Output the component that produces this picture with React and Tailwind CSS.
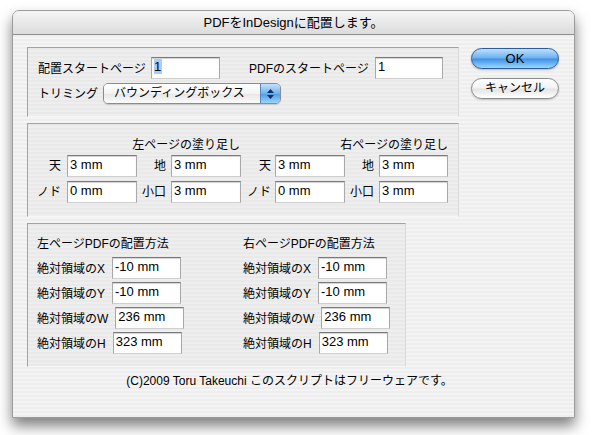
const font = "font-['Liberation_Sans','Noto_Sans_CJK_JP',sans-serif]";

const Field = ({ value, w = "w-[70px]", selected }) => (
  <div
    className={`${w} h-[22px] shrink-0 bg-white border border-[#a9a9a9] border-t-[#7a7a7a] border-b-[#cfcfcf] shadow-[inset_0_1px_1px_rgba(0,0,0,0.18)] pl-[2px] pt-[1px] text-[13px] leading-[16px] text-black`}
  >
    {selected ? <span className="bg-[#a9cdf7] pr-[1px]">{value}</span> : value}
  </div>
);

const GroupBox = ({ className, children }) => (
  <div
    className={`border border-[#a2a2a2] border-r-[#dadada] border-b-[#f6f6f6] bg-[repeating-linear-gradient(180deg,#e9e9e9_0px,#e9e9e9_2px,#eeeeee_2px,#eeeeee_4px)] ${className}`}
  >
    {children}
  </div>
);

const Popup = () => (
  <div className="flex h-[21px] w-[178px] rounded-[5px] border border-[#8c8c8c] overflow-hidden shadow-[0_1px_1px_rgba(0,0,0,0.15)]">
    <div className="flex-1 bg-[linear-gradient(180deg,#ffffff_0%,#f3f3f3_50%,#e6e6e6_51%,#fbfbfb_100%)] pl-[10px] text-[12px] leading-[19px]">
      バウンディングボックス
    </div>
    <div className="w-[20px] border-l border-[#5a86c2] bg-[linear-gradient(180deg,#c6e1fb_0%,#6fb1ef_50%,#4c9be8_51%,#9ad4fb_100%)] flex flex-col items-center justify-center gap-[2px]">
      <svg width="7" height="4" viewBox="0 0 7 4">
        <path d="M3.5 0L7 4H0z" fill="#15305e" />
      </svg>
      <svg width="7" height="4" viewBox="0 0 7 4">
        <path d="M0 0h7L3.5 4z" fill="#15305e" />
      </svg>
    </div>
  </div>
);

const BleedRow = ({ labels, values }) => (
  <div className="flex items-center">
    <div className="w-[39px] pr-[6px] text-right text-[12px]">{labels[0]}</div>
    <Field value={values[0]} />
    <div className="w-[34px] pr-[5px] text-right text-[12px]">{labels[1]}</div>
    <Field value={values[1]} />
    <div className="w-[34px] pr-[4px] text-right text-[12px]">{labels[0]}</div>
    <Field value={values[0]} />
    <div className="w-[34px] pr-[5px] text-right text-[12px]">{labels[1]}</div>
    <Field value={values[1]} w="w-[69px]" />
  </div>
);

const PlaceColumn = ({ title, className }) => {
  const rows = [
    ["X", "-10 mm"],
    ["Y", "-10 mm"],
    ["W", "236 mm"],
    ["H", "323 mm"],
  ];
  return (
    <div className={`flex flex-col ${className}`}>
      <div className="text-[12px] leading-[16px]">{title}</div>
      <div className="mt-[5px] flex flex-col gap-[3px]">
        {rows.map(([axis, val]) => (
          <div key={axis} className="flex items-center">
            <span className="text-[12px] pt-[2px]">絶対領域の{axis}</span>
            <div className="ml-[7px]">
              <Field value={val} w="w-[69px]" />
            </div>
          </div>
        ))}
      </div>
    </div>
  );
};

export default function App() {
  return (
    <div className={`w-[604px] h-[435px] bg-white overflow-hidden pt-[10px] pl-[12px] ${font} text-black`}>
      <div className="w-[563px] rounded-t-[7px] border border-[#9c9c9c] bg-[repeating-linear-gradient(180deg,#eeeeee_0px,#eeeeee_2px,#f4f4f4_2px,#f4f4f4_4px)] shadow-[0_8px_14px_rgba(0,0,0,0.5)]">
        {/* title bar */}
        <div className="h-[24px] rounded-t-[6px] border-b border-[#8e8e8e] bg-[linear-gradient(180deg,#f5f5f5,#dcdcdc)] text-center text-[13px] leading-[23px]">
          PDFをInDesignに配置します。
        </div>

        <div className="flex pt-[12px] pl-[14px]">
          <div className="flex flex-col">
            {/* page settings */}
            <GroupBox className="w-[432px] h-[70px] pt-[9px] pl-[10px]">
              <div className="flex items-center">
                <div className="w-[113px] text-[12px] pt-[2px]">配置スタートページ</div>
                <Field value="1" w="w-[69px]" selected />
                <div className="ml-[29px] w-[126px] text-[12px] pt-[2px]">PDFのスタートページ</div>
                <Field value="1" w="w-[68px]" />
              </div>
              <div className="flex items-center mt-[4px]">
                <div className="w-[65px] text-[12px]">トリミング</div>
                <Popup />
              </div>
            </GroupBox>

            {/* bleed */}
            <GroupBox className="mt-[6px] w-[432px] h-[94px] pt-[13px]">
              <div className="flex text-[12px] leading-[16px]">
                <div className="w-[213px] pr-[1px] text-right">左ページの塗り足し</div>
                <div className="w-[208px] pr-[1px] text-right">右ページの塗り足し</div>
              </div>
              <div className="mt-[2px] flex flex-col gap-[4px]">
                <BleedRow labels={["天", "地"]} values={["3 mm", "3 mm"]} />
                <BleedRow labels={["ノド", "小口"]} values={["0 mm", "3 mm"]} />
              </div>
            </GroupBox>

            {/* placement */}
            <GroupBox className="mt-[6px] w-[379px] h-[144px] pt-[12px] pl-[9px] flex">
              <PlaceColumn title="左ページPDFの配置方法" className="w-[206px] shrink-0" />
              <PlaceColumn title="右ページPDFの配置方法" className="flex-1" />
            </GroupBox>
          </div>

          {/* buttons */}
          <div className="ml-[12px] pt-[1px] flex flex-col">
            <div className="w-[88px] h-[21px] rounded-full border border-[#2b5a9e] bg-[linear-gradient(180deg,#bfe0fb_0%,#6cb0f0_48%,#3f8fe7_52%,#9bd7fc_100%)] shadow-[0_1px_2px_rgba(0,0,0,0.25)] text-center text-[13px] leading-[19px]">
              OK
            </div>
            <div className="mt-[9px] w-[88px] h-[21px] rounded-full border border-[#8a8a8a] bg-[linear-gradient(180deg,#ffffff_0%,#f2f2f2_48%,#e3e3e3_52%,#ffffff_100%)] shadow-[0_1px_2px_rgba(0,0,0,0.2)] text-center text-[12px] leading-[19px]">
              キャンセル
            </div>
          </div>
        </div>

        <div className="mt-[6px] pb-[28px] text-center text-[12px] leading-[16px] pr-[8px]">
          (C)2009 Toru Takeuchi このスクリプトはフリーウェアです。
        </div>
      </div>
    </div>
  );
}
